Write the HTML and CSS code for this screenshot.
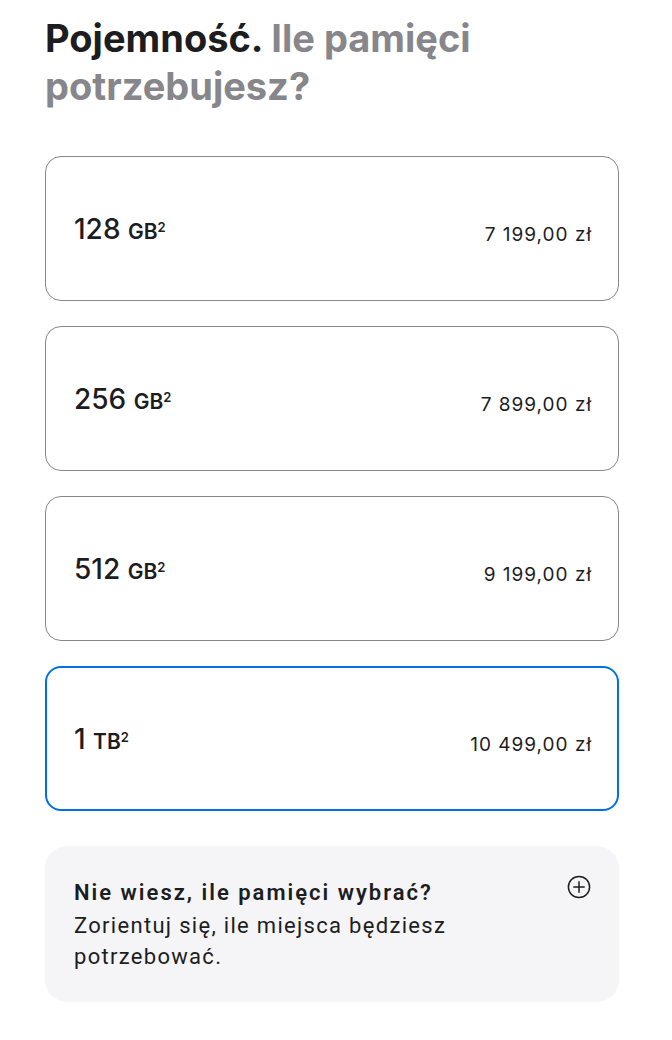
FILE: index.html
```html
<!DOCTYPE html>
<html lang="pl">
<head>
  <meta charset="utf-8">
  <title>Pojemność</title>
  <link rel="stylesheet" href="styles.css">
</head>
<body>
  <section class="capacity">
    <h2 class="capacity-title">Pojemność. <span class="muted">Ile pamięci potrzebujesz?</span></h2>

    <div class="options">
      <label class="option">
        <span class="size">128 <span class="unit">GB<sup>2</sup></span></span>
        <span class="price">7 199,00 zł</span>
      </label>
      <label class="option">
        <span class="size">256 <span class="unit">GB<sup>2</sup></span></span>
        <span class="price">7 899,00 zł</span>
      </label>
      <label class="option">
        <span class="size">512 <span class="unit">GB<sup>2</sup></span></span>
        <span class="price">9 199,00 zł</span>
      </label>
      <label class="option selected">
        <span class="size">1 <span class="unit">TB<sup>2</sup></span></span>
        <span class="price">10 499,00 zł</span>
      </label>
    </div>

    <div class="help">
      <div class="help-text">
        <p class="help-title">Nie wiesz, ile pamięci wybrać?</p>
        <p>Zorientuj się, ile miejsca będziesz potrzebować.</p>
      </div>
      <svg class="plus" width="24" height="24" viewBox="0 0 24 24" aria-hidden="true">
        <circle cx="12" cy="12" r="10.6" fill="none" stroke="#1d1d1f" stroke-width="1.5"/>
        <path d="M12 6.8v10.4M6.8 12h10.4" stroke="#1d1d1f" stroke-width="1.5" stroke-linecap="round"/>
      </svg>
    </div>
  </section>
</body>
</html>
```

FILE: styles.css
```css
body {
  margin: 0;
  background: #fff;
  color: #1d1d1f;
  font-family: Inter, "Liberation Sans", sans-serif;
}

.capacity {
  width: 574px;
  padding: 14px 0 40px 45px;
}

.capacity-title {
  margin: 0 0 46px;
  font-size: 38px;
  line-height: 48px;
  font-weight: 700;
  letter-spacing: 0;
}

.muted {
  color: #86868b;
}

.options {
  display: flex;
  flex-direction: column;
  gap: 25px;
}

.option {
  display: flex;
  align-items: center;
  justify-content: space-between;
  height: 143px;
  padding: 0 27px 0 28px;
  border: 1px solid #86868b;
  border-radius: 16px;
}

.option.selected {
  height: 141px;
  padding: 0 26px 0 27px;
  border: 2px solid #0071e3;
}

.size {
  font-size: 28px;
  font-weight: 500;
}

.unit {
  font-size: 21px;
  font-weight: 600;
}

.unit sup {
  font-size: 13px;
  vertical-align: 7px;
}

.price {
  padding-top: 12px;
  font-size: 19px;
  letter-spacing: 1px;
  margin-right: -1px;
}

.help {
  display: flex;
  justify-content: space-between;
  align-items: flex-start;
  margin-top: 35px;
  padding: 31px 28px 30px 29px;
  background: #f5f5f7;
  border-radius: 22px;
  font-family: Roboto, "Liberation Sans", sans-serif;
}

.help-text {
  width: 470px;
}

.help p {
  margin: 0;
  font-size: 22px;
  line-height: 31px;
  letter-spacing: 1.3px;
}

.help .help-title {
  margin-bottom: 2px;
  font-weight: 600;
  letter-spacing: 2px;
}

.plus {
  margin-top: -2px;
}
```
